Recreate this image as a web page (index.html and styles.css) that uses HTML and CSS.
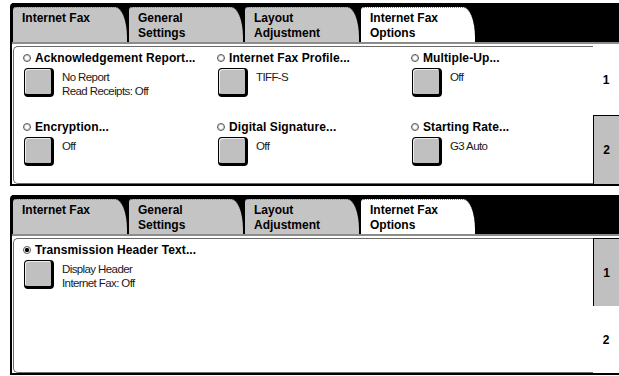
FILE: index.html
```html
<!DOCTYPE html>
<html lang="en">
<head>
    <meta charset="UTF-8">
    <title>Internet Fax Options</title>
    <link rel="stylesheet" href="styles.css">
</head>
<body>
    <!-- screen 1 -->
    <div class="panel">
        <div class="tabs">
            <div class="tab">Internet Fax</div>
            <div class="tab">General<br>Settings</div>
            <div class="tab">Layout<br>Adjustment</div>
            <div class="tab active">Internet Fax<br>Options</div>
        </div>
        <div class="rule"></div>
        <div class="body">
            <div class="content">
                <div class="item">
                    <div class="label"><span class="radio"></span>Acknowledgement Report...</div>
                    <div class="row">
                        <div class="btn"></div>
                        <div class="value">No Report<br>Read Receipts: Off</div>
                    </div>
                </div>
                <div class="item">
                    <div class="label"><span class="radio"></span>Internet Fax Profile...</div>
                    <div class="row">
                        <div class="btn"></div>
                        <div class="value">TIFF-S</div>
                    </div>
                </div>
                <div class="item">
                    <div class="label"><span class="radio"></span>Multiple-Up...</div>
                    <div class="row">
                        <div class="btn"></div>
                        <div class="value">Off</div>
                    </div>
                </div>
                <div class="item">
                    <div class="label"><span class="radio"></span>Encryption...</div>
                    <div class="row">
                        <div class="btn"></div>
                        <div class="value">Off</div>
                    </div>
                </div>
                <div class="item">
                    <div class="label"><span class="radio"></span>Digital Signature...</div>
                    <div class="row">
                        <div class="btn"></div>
                        <div class="value">Off</div>
                    </div>
                </div>
                <div class="item">
                    <div class="label"><span class="radio"></span>Starting Rate...</div>
                    <div class="row">
                        <div class="btn"></div>
                        <div class="value">G3 Auto</div>
                    </div>
                </div>
            </div>
            <div class="pages">
                <div class="page">1</div>
                <div class="page current">2</div>
            </div>
        </div>
    </div>

    <!-- screen 2 -->
    <div class="panel second">
        <div class="tabs">
            <div class="tab">Internet Fax</div>
            <div class="tab">General<br>Settings</div>
            <div class="tab">Layout<br>Adjustment</div>
            <div class="tab active">Internet Fax<br>Options</div>
        </div>
        <div class="rule"></div>
        <div class="body">
            <div class="content">
                <div class="item">
                    <div class="label"><span class="radio on"></span>Transmission Header Text...</div>
                    <div class="row">
                        <div class="btn"></div>
                        <div class="value">Display Header<br>Internet Fax: Off</div>
                    </div>
                </div>
            </div>
            <div class="pages">
                <div class="page current">1</div>
                <div class="page">2</div>
            </div>
        </div>
    </div>
</body>
</html>
```

FILE: styles.css
```css
body {
    margin: 0;
    padding-top: 3px;
    background: #fff;
    font-family: 'Liberation Sans', Arial, sans-serif;
    color: #000;
}

.panel {
    margin-left: 10px;
    border-left: 2px solid #000;
    border-bottom: 2px solid #000;
    border-top-left-radius: 4px;
}

.panel.second {
    margin-top: 9px;
}

/* tab strip */
.tabs {
    display: flex;
    gap: 2px;
    height: 39px;
    padding: 4px 0 0 1px;
    box-sizing: border-box;
    background: #000;
}

.tab {
    width: 114px;
    height: 35px;
    box-sizing: border-box;
    padding: 3px 0 0 9px;
    background: #c4c4c4;
    border-top: 1px dotted #8a8a8a;
    border-radius: 3px 12px 0 0 / 3px 30px 0 0;
    font-size: 12px;
    font-weight: bold;
    line-height: 15px;
}

.tab.active {
    background: #fff;
}

.rule {
    height: 2px;
    background: #8c8c8c;
}

.body {
    display: flex;
    height: 140px;
    background: #fff;
}

.second .body {
    height: 137px;
}

.content {
    flex: 1;
    margin: 2px 0 0 1px;
    padding: 4px 0 0 9px;
    border: 1px solid #6a6a6a;
    border-right: none;
    border-radius: 5px 0 0 5px;
    display: grid;
    grid-template-columns: 194px 194px 1fr;
    grid-auto-rows: 45px;
    row-gap: 24px;
    align-content: start;
}

.label {
    display: flex;
    align-items: center;
    gap: 4px;
    height: 14px;
    font-size: 12px;
    font-weight: bold;
    letter-spacing: 0.1px;
    white-space: nowrap;
}

.radio {
    width: 6px;
    height: 6px;
    border: 1px solid #555;
    border-radius: 50%;
    background: #fff;
    box-shadow: inset 0 0 0 1px #d0d0d0;
}

.radio.on {
    background: radial-gradient(circle, #000 45%, #fff 55%);
    box-shadow: none;
}

.row {
    display: flex;
    margin-top: 3px;
}

.btn {
    width: 26px;
    height: 25px;
    margin-left: 1px;
    background: #c0c0c0;
    border: 1px solid #000;
    border-right-width: 3px;
    border-bottom-width: 3px;
    border-radius: 4px;
    box-shadow: inset 1px 1px 0 #ececec;
}

.value {
    margin: 2px 0 0 8px;
    font-size: 11.5px;
    line-height: 14px;
    letter-spacing: -0.6px;
    color: #1a1a1a;
}

/* page selector */
.pages {
    width: 26px;
    display: flex;
    flex-direction: column;
    padding-top: 2px;
}

.page {
    flex: 1;
    display: flex;
    align-items: center;
    justify-content: center;
    font-size: 12px;
    font-weight: bold;
}

.page.current {
    background: #c0c0c0;
    border: 1px solid #000;
    border-right: none;
    border-bottom: none;
}
```
